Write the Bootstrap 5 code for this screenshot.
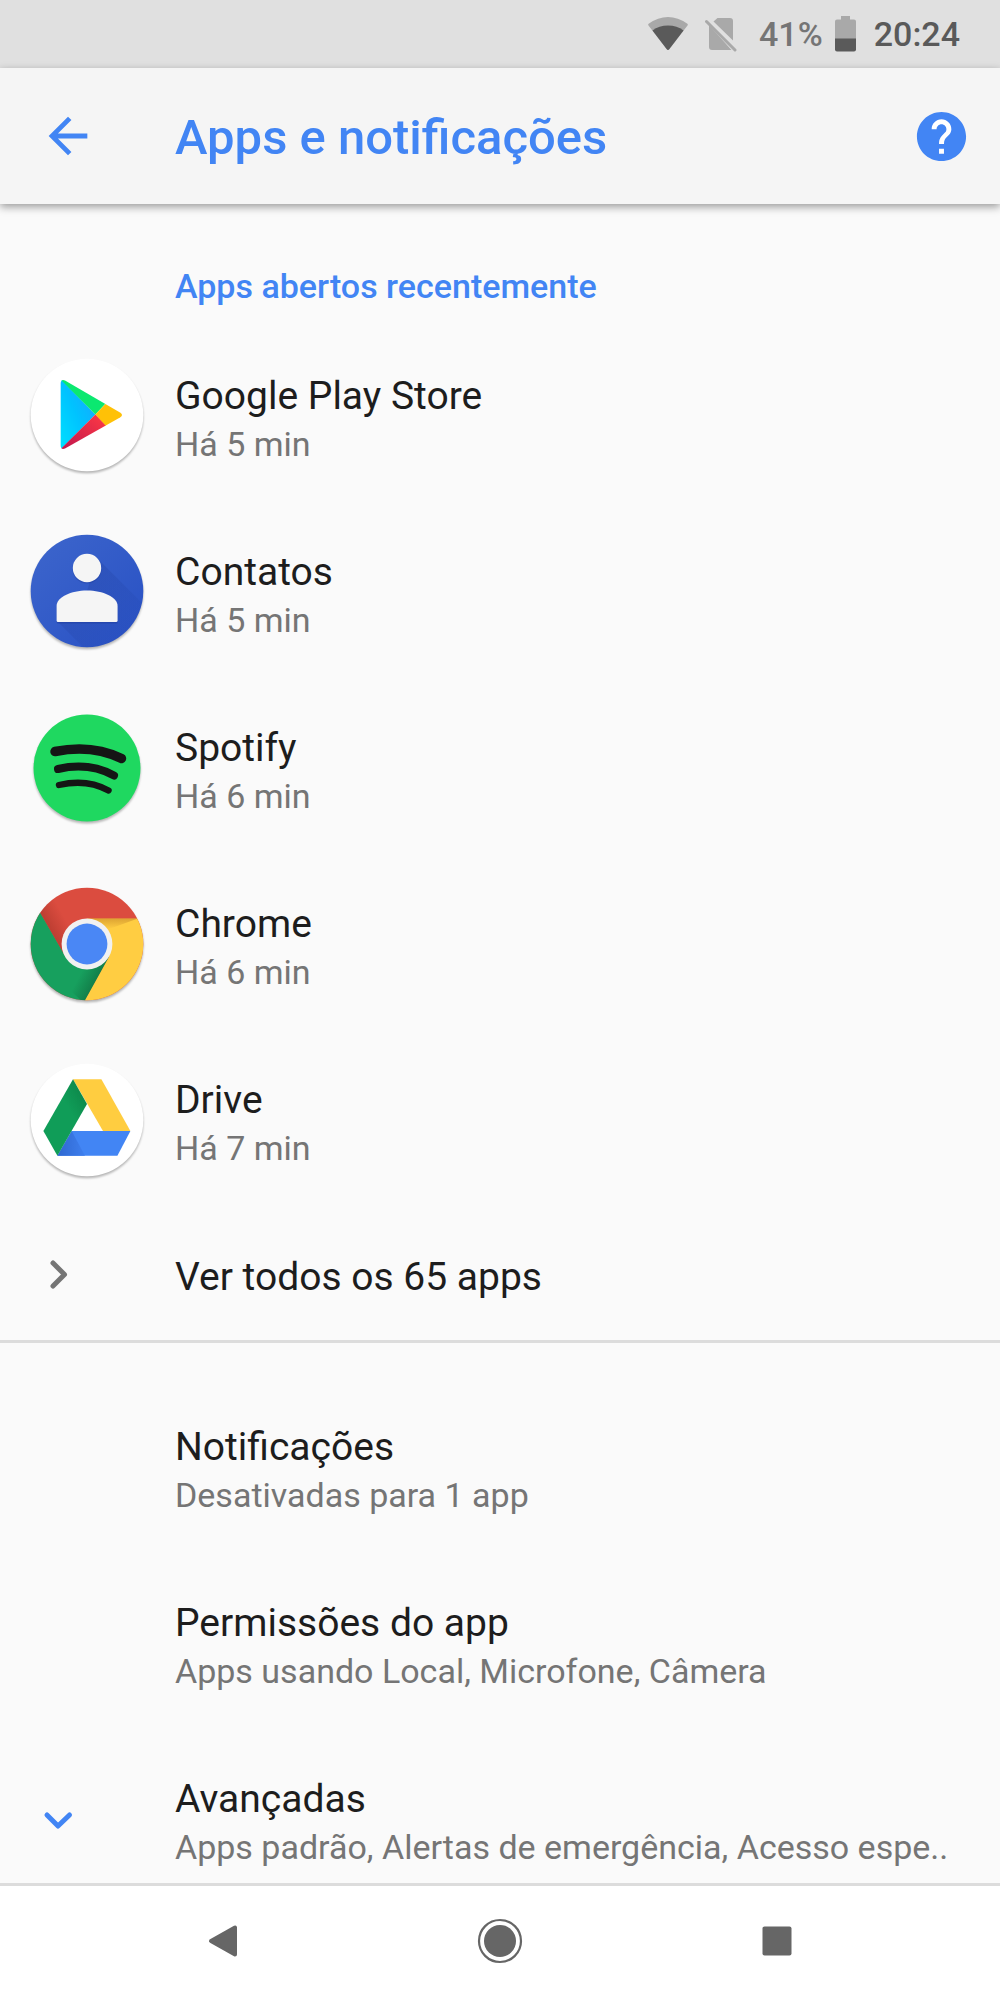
<!DOCTYPE html>
<html lang="pt-BR">
<head>
<meta charset="utf-8">
<meta name="viewport" content="width=device-width, initial-scale=1">
<title>Apps e notificações</title>
<link href="https://cdn.jsdelivr.net/npm/bootstrap@5.3.0/dist/css/bootstrap.min.css" rel="stylesheet">
<style>
  :root { --accent: #4285f4; --ink: #1d1d1d; --soft: #757575; --line: #dcdcdc; }
  body { font-family: Roboto, "Liberation Sans", sans-serif; background: #fafafa; color: var(--ink); }
  svg { display: block; flex: none; }
  .status-bar { background: #e0e0e0; height: 68px; padding-right: 40px; font-size: 34px; line-height: 48px; font-weight: 500; color: #5a5a5a; }
  .battery-level { color: #757575; margin: 0 12px 0 22px; }
  .clock { margin-left: 18px; }
  .app-bar { background: #f5f5f5; height: 136px; padding-right: 29px; box-shadow: 0 3px 8px rgba(0,0,0,.38); z-index: 1; }
  .app-title { font-size: 49px; line-height: 56px; font-weight: 500; color: var(--accent); padding-top: 4px; }
  .lead-col { width: 175px; flex: none; }
  .lead-start { padding-left: 29px; }
  .back-slot { padding-left: 39px; }
  .pane { scrollbar-width: none; }
  .pane::-webkit-scrollbar { display: none; }
  .section-name { font-size: 34px; line-height: 48px; font-weight: 500; color: var(--accent); padding: 58px 0 17px 175px; }
  .entry { height: 176px; color: inherit; text-decoration: none; }
  .entry-text { padding-top: 10px; }
  .entry-short { height: 133px; }
  .entry-short .entry-text { padding-top: 6px; }
  .entry-name { font-size: 39px; line-height: 48px; }
  .entry-note { font-size: 34px; line-height: 48px; color: var(--soft); }
  .group-two { border-top: 3px solid var(--line); padding-top: 35px; }
  .nav-keys { background: #fff; border-top: 3px solid var(--line); height: 117px; padding: 0 85px 4px; }
  .app-icon { filter: drop-shadow(0 2px 1px rgba(0,0,0,.28)); }
  .plain-btn { background: none; border: 0; padding: 0; }
</style>
<script defer src="https://cdn.jsdelivr.net/npm/bootstrap@5.3.0/dist/js/bootstrap.bundle.min.js"></script>
</head>
<body class="d-flex flex-column vh-100 overflow-hidden">

<div class="status-bar d-flex align-items-center justify-content-end flex-shrink-0">
  <svg width="42" height="36" viewBox="0 0 42 36" aria-hidden="true">
    <path d="M1.500 9.500C1 9 1 8.300 1.600 7.800Q11 1 21 1T40.400 7.800C41 8.300 41 9 40.500 9.500L22.200 33.300Q21 34.600 19.800 33.300Z" fill="#a9a9a9"/>
    <path d="M5.500 14.600Q12 9.500 21 9.500T36.500 14.600L22.200 33.300Q21 34.600 19.800 33.300Z" fill="#5a5a5a"/>
  </svg>
  <svg class="ms-3" width="32" height="36" viewBox="0 0 32 36" aria-hidden="true">
    <path d="M12.500 2H25Q28 2 28 5V24.500L8.500 5.500ZM4 9V31Q4 34 7 34H26.500Z" fill="#a9a9a9"/>
    <path d="M1.500 5.500L30 34" stroke="#a9a9a9" stroke-width="3" stroke-linecap="round"/>
  </svg>
  <span class="battery-level">41%</span>
  <svg width="21" height="36" viewBox="0 0 21 36" aria-hidden="true">
    <path d="M6 0H15V3.500H19Q21 3.500 21 5.500V23H0V5.500Q0 3.500 2 3.500H6Z" fill="#a9a9a9"/>
    <path d="M0 22.500H21V33.500Q21 35.500 19 35.500H2Q0 35.500 0 33.500Z" fill="#5a5a5a"/>
  </svg>
  <span class="clock">20:24</span>
</div>

<header class="app-bar d-flex align-items-center flex-shrink-0 position-relative">
  <div class="lead-col back-slot d-flex">
    <button type="button" class="plain-btn" aria-label="Voltar">
      <svg width="58" height="58" viewBox="0 0 24 24" fill="#4285f4"><path d="M20 11H7.830l5.590-5.590L12 4l-8 8 8 8 1.410-1.410L7.830 13H20z"/></svg>
    </button>
  </div>
  <h1 class="app-title m-0 flex-grow-1">Apps e notificações</h1>
  <button type="button" class="plain-btn" aria-label="Ajuda">
    <svg width="59" height="59" viewBox="0 0 24 24" fill="#4285f4"><circle cx="12" cy="12" r="9" fill="#fff"/><path d="M12 2C6.480 2 2 6.480 2 12s4.480 10 10 10 10-4.480 10-10S17.520 2 12 2zm1 17h-2v-2h2zm2.070-7.750l-.9.920C13.450 12.900 13 13.500 13 15h-2v-.5c0-1.100.450-2.100 1.170-2.830l1.240-1.260c.370-.360.590-.860.590-1.410 0-1.100-.9-2-2-2s-2 .9-2 2H8c0-2.210 1.790-4 4-4s4 1.790 4 4c0 .880-.360 1.680-.930 2.250z"/></svg>
  </button>
</header>

<main class="pane flex-grow-1 overflow-auto">
  <section>
    <h2 class="section-name m-0">Apps abertos recentemente</h2>

    <a href="#" class="entry d-flex align-items-center">
      <div class="lead-col d-flex justify-content-center">
        <svg class="app-icon" width="120" height="120" viewBox="1 0 120 120" aria-hidden="true">
          <defs>
            <linearGradient id="playBlue" x1="1" y1="0" x2="0" y2="1"><stop offset="0" stop-color="#1ea0ff"/><stop offset=".5" stop-color="#00c3ff"/><stop offset="1" stop-color="#00e5ff"/></linearGradient>
            <linearGradient id="playRed" x1="1" y1="0" x2="0" y2="1"><stop offset="0" stop-color="#ff3a44"/><stop offset="1" stop-color="#b9134f"/></linearGradient>
            <clipPath id="playShape"><path d="M33.700 28Q34 24 38 25.500L93 57.500Q97 60 93 62.500L38 93.500Q34 95 33.700 91Z"/></clipPath>
          </defs>
          <circle cx="60" cy="60" r="56.300" fill="#fff"/>
          <g clip-path="url(#playShape)">
            <path d="M30 20L68.400 59.600L30 98Z" fill="url(#playBlue)"/>
            <path d="M33 20H40L80 47L68.400 59.600L33 24Z" fill="#0be870"/>
            <path d="M78.800 48.500L100 60L78.800 71.500L68.400 59.600Z" fill="#ffc107"/>
            <path d="M68.400 59.600L79 71L40 98H30L33.700 94Z" fill="url(#playRed)"/>
          </g>
        </svg>
      </div>
      <div class="entry-text"><div class="entry-name">Google Play Store</div><div class="entry-note">Há 5 min</div></div>
    </a>

    <a href="#" class="entry d-flex align-items-center">
      <div class="lead-col d-flex justify-content-center">
        <svg class="app-icon" width="120" height="120" viewBox="1 0 120 120" aria-hidden="true">
          <defs>
            <linearGradient id="contactBg" x1="0" y1="0" x2="1" y2="1"><stop offset="0" stop-color="#3d66cc"/><stop offset="1" stop-color="#2850c4"/></linearGradient>
            <linearGradient id="contactShade" x1="0" y1="0" x2="1" y2="1"><stop offset="0" stop-color="#1a3590" stop-opacity=".3"/><stop offset="1" stop-color="#1a3590" stop-opacity="0"/></linearGradient>
            <clipPath id="contactDisc"><circle cx="60" cy="60" r="56.300"/></clipPath>
          </defs>
          <circle cx="60" cy="60" r="56.300" fill="url(#contactBg)"/>
          <g clip-path="url(#contactDisc)"><path d="M70 27L120 77V120H60L31 91L60 60Z" fill="url(#contactShade)"/></g>
          <circle cx="60" cy="38" r="14.500" fill="#1d3c9c" opacity=".4"/>
          <circle cx="60" cy="37" r="14.200" fill="#f5f5f5"/>
          <path d="M29.600 76C29.600 66 44 60.500 60 60.500S90.600 66 90.600 76V91Q90.600 92.500 89 92.500H31Q29.600 92.500 29.600 91Z" fill="#1d3c9c" opacity=".5"/>
          <path d="M29.600 75C29.600 66 44 59.500 60 59.500S90.600 66 90.600 75V89.500Q90.600 91 89 91H31Q29.600 91 29.600 89.500Z" fill="#f5f5f5"/>
        </svg>
      </div>
      <div class="entry-text"><div class="entry-name">Contatos</div><div class="entry-note">Há 5 min</div></div>
    </a>

    <a href="#" class="entry d-flex align-items-center">
      <div class="lead-col d-flex justify-content-center">
        <svg class="app-icon" width="120" height="120" viewBox="1 0 120 120" aria-hidden="true">
          <circle cx="60" cy="61" r="53.500" fill="#1fd860"/>
          <g fill="none" stroke="#151515" stroke-linecap="round">
            <path d="M28 44.500Q65 37 94.500 51.500" stroke-width="9.500"/>
            <path d="M31 62Q62 55 87 68.500" stroke-width="8"/>
            <path d="M32 78Q60 71.500 81.500 83.500" stroke-width="6.400"/>
          </g>
        </svg>
      </div>
      <div class="entry-text"><div class="entry-name">Spotify</div><div class="entry-note">Há 6 min</div></div>
    </a>

    <a href="#" class="entry d-flex align-items-center">
      <div class="lead-col d-flex justify-content-center">
        <svg class="app-icon" width="120" height="120" viewBox="1 0 120 120" aria-hidden="true">
          <defs>
            <clipPath id="chromeDisc"><circle cx="60" cy="61" r="56.300"/></clipPath>
            <linearGradient id="redShade" gradientUnits="userSpaceOnUse" x1="24" y1="48" x2="40" y2="39"><stop offset="0" stop-color="#7a1f16" stop-opacity=".3"/><stop offset="1" stop-color="#7a1f16" stop-opacity="0"/></linearGradient>
            <linearGradient id="yellowShade" gradientUnits="userSpaceOnUse" x1="0" y1="35" x2="0" y2="46"><stop offset="0" stop-color="#a5601a" stop-opacity=".4"/><stop offset="1" stop-color="#a5601a" stop-opacity="0"/></linearGradient>
            <linearGradient id="greenShade" gradientUnits="userSpaceOnUse" x1="70" y1="96" x2="55" y2="88"><stop offset="0" stop-color="#0b4d2c" stop-opacity=".4"/><stop offset="1" stop-color="#0b4d2c" stop-opacity="0"/></linearGradient>
          </defs>
          <g clip-path="url(#chromeDisc)">
            <rect width="120" height="120" fill="#db4c3f"/>
            <path d="M13.400 30.300L38 73L60 66V0H0Z" fill="url(#redShade)"/>
            <path d="M0 7L38 73L82 74L57 120H0Z" fill="#17a05e"/>
            <path d="M38 73L82 74L57 120L35 100Z" fill="url(#greenShade)"/>
            <path d="M60 35.500H120V120H56.500L82 74Z" fill="#ffcd42"/>
            <path d="M60 35.500H111L82 46H60Z" fill="url(#yellowShade)"/>
          </g>
          <circle cx="60" cy="61" r="25.400" fill="#f1f1f1"/>
          <circle cx="60" cy="61" r="20.400" fill="#4a87f5"/>
        </svg>
      </div>
      <div class="entry-text"><div class="entry-name">Chrome</div><div class="entry-note">Há 6 min</div></div>
    </a>

    <a href="#" class="entry d-flex align-items-center">
      <div class="lead-col d-flex justify-content-center">
        <svg class="app-icon" width="120" height="120" viewBox="1 0 120 120" aria-hidden="true">
          <defs>
            <linearGradient id="driveBlue" x1="0" y1="0" x2="1" y2="0"><stop offset="0" stop-color="#2f68d0"/><stop offset="1" stop-color="#3f7fee"/></linearGradient>
            <linearGradient id="driveGreen" x1="0" y1="1" x2="1" y2="0"><stop offset=".6" stop-color="#109d58"/><stop offset="1" stop-color="#0b7f45"/></linearGradient>
          </defs>
          <circle cx="60" cy="61" r="56.300" fill="#fff"/>
          <path d="M46 20.300H74.400L103.400 72H76Z" fill="#ffcd40"/>
          <path d="M44.700 72H103.400L90.400 96.700H30.400Z" fill="#4285f4"/>
          <path d="M44.700 72L58 96.700H30.400Z" fill="url(#driveBlue)"/>
          <path d="M46 20.300L60 45L30.400 96.700L16.400 72Z" fill="url(#driveGreen)"/>
        </svg>
      </div>
      <div class="entry-text"><div class="entry-name">Drive</div><div class="entry-note">Há 7 min</div></div>
    </a>

    <a href="#" class="entry entry-short d-flex align-items-center">
      <div class="lead-col lead-start">
        <svg width="58" height="58" viewBox="0 0 58 58" fill="none" stroke="#757575" stroke-width="5" stroke-linecap="round" stroke-linejoin="round" aria-hidden="true"><path d="M24 18L35.500 29.500L24 41"/></svg>
      </div>
      <div class="entry-text"><div class="entry-name">Ver todos os 65 apps</div></div>
    </a>
  </section>

  <section class="group-two">
    <a href="#" class="entry d-flex align-items-center">
      <div class="lead-col"></div>
      <div class="entry-text"><div class="entry-name">Notificações</div><div class="entry-note">Desativadas para 1 app</div></div>
    </a>
    <a href="#" class="entry d-flex align-items-center">
      <div class="lead-col"></div>
      <div class="entry-text"><div class="entry-name">Permissões do app</div><div class="entry-note">Apps usando Local, Microfone, Câmera</div></div>
    </a>
    <a href="#" class="entry d-flex align-items-center">
      <div class="lead-col lead-start">
        <svg width="58" height="58" viewBox="0 0 58 58" fill="none" stroke="#4285f4" stroke-width="5" stroke-linecap="round" stroke-linejoin="round" aria-hidden="true"><path d="M18 26L29 37L40.500 26"/></svg>
      </div>
      <div class="entry-text overflow-hidden text-nowrap"><div class="entry-name">Avançadas</div><div class="entry-note">Apps padrão, Alertas de emergência, Acesso espe..</div></div>
    </a>
  </section>
</main>

<nav class="nav-keys d-flex align-items-center flex-shrink-0" aria-label="Navegação do sistema">
  <button type="button" class="plain-btn flex-fill d-flex justify-content-center" aria-label="Voltar">
    <svg width="48" height="48" viewBox="0 0 48 48" fill="#666" stroke="#666" stroke-width="4" stroke-linejoin="round"><path d="M12 24L36 10.500V37.500Z"/></svg>
  </button>
  <button type="button" class="plain-btn flex-fill d-flex justify-content-center" aria-label="Início">
    <svg width="48" height="48" viewBox="0 0 48 48"><circle cx="24" cy="24" r="21" fill="none" stroke="#666" stroke-width="2.200"/><circle cx="24" cy="24" r="16" fill="#666"/></svg>
  </button>
  <button type="button" class="plain-btn flex-fill d-flex justify-content-center" aria-label="Recentes">
    <svg width="48" height="48" viewBox="0 0 48 48"><rect x="9.500" y="9.500" width="29" height="29" rx="2" fill="#666"/></svg>
  </button>
</nav>
</body>
</html>
